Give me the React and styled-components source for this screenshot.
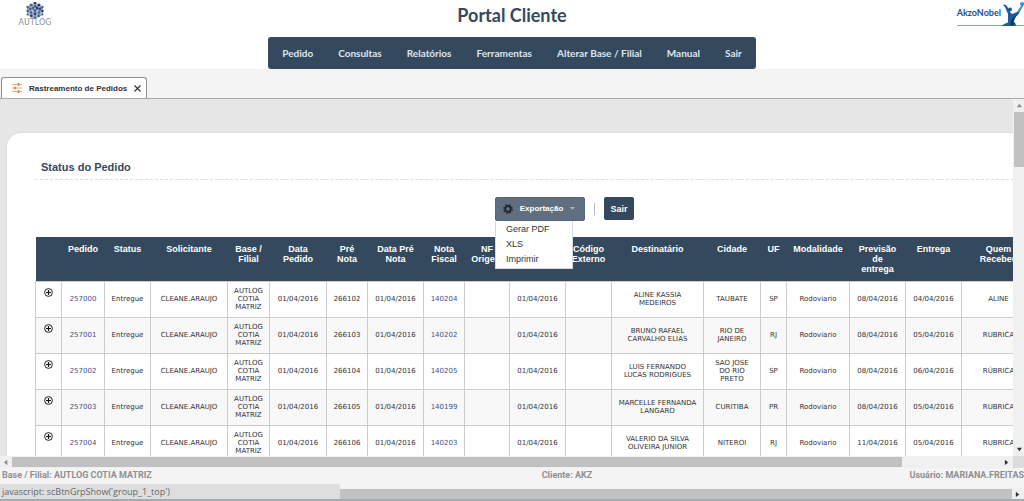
import React from 'react';
import styled, { createGlobalStyle } from 'styled-components';

const menu = ['Pedido', 'Consultas', 'Relatórios', 'Ferramentas', 'Alterar Base / Filial', 'Manual', 'Sair'];

const columns = [
  { title: '', width: 26 },
  { title: 'Pedido', width: 43 },
  { title: 'Status', width: 46 },
  { title: 'Solicitante', width: 77 },
  { title: 'Base / Filial', width: 42 },
  { title: 'Data Pedido', width: 57 },
  { title: 'Pré Nota', width: 41 },
  { title: 'Data Pré Nota', width: 56 },
  { title: 'Nota Fiscal', width: 41 },
  { title: 'NF Origem', width: 45 },
  { title: '', width: 56 },
  { title: 'Código Externo', width: 46 },
  { title: 'Destinatário', width: 92 },
  { title: 'Cidade', width: 57 },
  { title: 'UF', width: 26 },
  { title: 'Modalidade', width: 63 },
  { title: 'Previsão de entrega', width: 56 },
  { title: 'Entrega', width: 56 },
  { title: 'Quem Recebeu', width: 74 },
  { title: '', width: 58 },
];

const orders = [
  { id: '257000', pre: '266102', nf: '140204', dest: 'ALINE KASSIA MEDEIROS', city: 'TAUBATE', uf: 'SP', due: '08/04/2016', done: '04/04/2016', by: 'ALINE' },
  { id: '257001', pre: '266103', nf: '140202', dest: 'BRUNO RAFAEL CARVALHO ELIAS', city: 'RIO DE JANEIRO', uf: 'RJ', due: '08/04/2016', done: '05/04/2016', by: 'RUBRICA' },
  { id: '257002', pre: '266104', nf: '140205', dest: 'LUIS FERNANDO LUCAS RODRIGUES', city: 'SAO JOSE DO RIO PRETO', uf: 'SP', due: '08/04/2016', done: '06/04/2016', by: 'RÚBRICA' },
  { id: '257003', pre: '266105', nf: '140199', dest: 'MARCELLE FERNANDA LANGARO', city: 'CURITIBA', uf: 'PR', due: '08/04/2016', done: '05/04/2016', by: 'RUBRICA' },
  { id: '257004', pre: '266106', nf: '140203', dest: 'VALERIO DA SILVA OLIVEIRA JUNIOR', city: 'NITEROI', uf: 'RJ', due: '11/04/2016', done: '05/04/2016', by: 'RUBRICA' },
];

const cubeDots = [
  [9, 1, 1.4], [5, 3, 1.5], [9, 4, 1.2], [13, 3, 1.5], [1.6, 5, 1.2], [7, 6, 1.4], [11, 6, 1.4], [16.4, 5, 1.2],
  [4, 7, 1.4], [14, 7, 1.4], [1.6, 9, 1.3], [9, 8.5, 1.5], [16.4, 9, 1.3], [5, 10.5, 1.3], [13, 10.5, 1.3],
  [9, 12, 1.4], [1.6, 12.5, 1.1], [16.4, 12.5, 1.1], [5.4, 14, 1.4], [12.6, 14, 1.4], [9, 16, 1.4],
];

export default function App() {
  return (
    <Page>
      <GlobalStyle />
      <Header>
        <AutlogLogo>
          <svg width="18" height="17" viewBox="0 0 18 17" aria-hidden="true">
            <path d="M9 1L16.4 5V12.5L9 16L1.6 12.5V5Z" fill="#b9c6da" />
            <path d="M9 1L16.4 5V12.5L9 16L1.6 12.5V5ZM1.6 5L9 8.5L16.4 5M9 8.5V16M5 3L13 7V14M13 3L5 7V14M1.6 9L9 12L16.4 9" fill="none" stroke="#7287a8" strokeWidth=".8" />
            {cubeDots.map(([x, y, r], i) => (
              <circle key={i} cx={x} cy={y} r={r} fill={i % 3 ? '#4a648f' : '#2a416d'} />
            ))}
          </svg>
          <span>AUTLOG</span>
        </AutlogLogo>
        <Center>
          <PortalTitle>Portal Cliente</PortalTitle>
          <Nav>
            {menu.map((item) => (
              <NavLink key={item} href="#">{item}</NavLink>
            ))}
          </Nav>
        </Center>
        <AkzoLogo>
          <span>AkzoNobel</span>
          <svg width="23" height="24" viewBox="0 0 23 24" aria-hidden="true">
            <path d="M0 24C3 22 5 21 7 20.500L7 12L4 5L2 3L4 2.500L6 4L9 10L11 12L16 10L20 4L19 1L22 0L23 2L17 13L13 16L12 19C14 20 15 22 15 24Z" fill="#1c5c9e" />
            <circle cx="9" cy="7.500" r="1.900" fill="#17508f" />
            <path d="M9 23L11 17L16 12L12.500 20L13 23Z" fill="#0f3564" />
            <path d="M16.500 10L20 4L19 1L22 0L21 5L18 10Z" fill="#4fa3cf" />
          </svg>
        </AkzoLogo>
      </Header>

      <TabBar>
        <Tab>
          <svg width="10" height="10" viewBox="0 0 10 10" aria-hidden="true">
            <path d="M0 1.5H10M0 5H10M0 8.5H10" stroke="#f4a078" strokeWidth="1.2" />
            <path d="M6.5 0V3M3 3.5V6.5M6.5 7V10" stroke="#ee7a45" strokeWidth="1.6" />
          </svg>
          <span>Rastreamento de Pedidos</span>
          <CloseButton type="button" aria-label="Fechar">
            <svg width="7" height="7" viewBox="0 0 7 7">
              <path d="M.5 .5L6.5 6.5M6.5 .5L.5 6.5" stroke="#333" strokeWidth="1.2" />
            </svg>
          </CloseButton>
        </Tab>
      </TabBar>

      <Pane>
        <Viewport>
          <Card>
            <CardTitle>Status do Pedido</CardTitle>
            <Toolbar>
              <ExportGroup>
                <ExportButton type="button">
                  <svg width="10" height="10" viewBox="0 0 10 10" aria-hidden="true">
                    <circle cx="5" cy="5" r="4.2" fill="none" stroke="#1d232a" strokeWidth="1.2" strokeDasharray="1.9 1.4" />
                    <circle cx="5" cy="5" r="2.8" fill="none" stroke="#1d232a" strokeWidth="1.8" />
                  </svg>
                  <span>Exportação</span>
                  <svg width="5" height="3" viewBox="0 0 5 3" aria-hidden="true">
                    <path d="M0 0H5L2.5 3Z" fill="#a9b2bc" />
                  </svg>
                </ExportButton>
                <ExportMenu>
                  <MenuItem href="#">Gerar PDF</MenuItem>
                  <MenuItem href="#">XLS</MenuItem>
                  <MenuItem href="#">Imprimir</MenuItem>
                </ExportMenu>
              </ExportGroup>
              <Separator />
              <ExitButton type="button">Sair</ExitButton>
            </Toolbar>
            <Grid>
              <colgroup>
                {columns.map((col, i) => (
                  <Col key={i} $width={col.width} />
                ))}
              </colgroup>
              <thead>
                <tr>
                  {columns.map((col, i) => (
                    <HeadCell key={i}>{col.title}</HeadCell>
                  ))}
                </tr>
              </thead>
              <tbody>
                {orders.map((order) => (
                  <Row key={order.id}>
                    <ExpandCell>
                      <ExpandButton type="button" aria-label={`Detalhes ${order.id}`}>
                        <svg width="9" height="9" viewBox="0 0 9 9">
                          <circle cx="4.5" cy="4.5" r="3.9" fill="none" stroke="#222" strokeWidth="1" />
                          <path d="M4.5 2V7M2 4.5H7" stroke="#111" strokeWidth="1.2" />
                        </svg>
                      </ExpandButton>
                    </ExpandCell>
                    <Cell><CellLink href="#">{order.id}</CellLink></Cell>
                    <Cell>Entregue</Cell>
                    <Cell>CLEANE.ARAUJO</Cell>
                    <Cell>AUTLOG COTIA MATRIZ</Cell>
                    <Cell>01/04/2016</Cell>
                    <Cell>{order.pre}</Cell>
                    <Cell>01/04/2016</Cell>
                    <Cell><CellLink href="#">{order.nf}</CellLink></Cell>
                    <Cell />
                    <Cell>01/04/2016</Cell>
                    <Cell />
                    <Cell>{order.dest}</Cell>
                    <Cell>{order.city}</Cell>
                    <Cell>{order.uf}</Cell>
                    <Cell>Rodoviario</Cell>
                    <Cell>{order.due}</Cell>
                    <Cell>{order.done}</Cell>
                    <Cell>{order.by}</Cell>
                    <Cell />
                  </Row>
                ))}
              </tbody>
            </Grid>
          </Card>
        </Viewport>
        <VerticalBar>
          <Arrow d="M0 4L3 0L6 4Z" color="#8a8a8a" />
          <VerticalThumb />
          <Arrow d="M0 0L3 4L6 0Z" color="#333" />
        </VerticalBar>
        <HorizontalBar>
          <Arrow d="M4 0L0 3L4 6Z" color="#8a8a8a" />
          <Track><Thumb $size="90%" /></Track>
          <Arrow d="M0 0L4 3L0 6Z" color="#333" />
        </HorizontalBar>
        <Corner />
      </Pane>

      <Footer>
        <span>Base / Filial: AUTLOG COTIA MATRIZ</span>
        <span>Cliente: AKZ</span>
        <span>Usuário: MARIANA.FREITAS</span>
      </Footer>
      <PageBar>
        <Track><Thumb $size="100%" /></Track>
        <Arrow d="M0 0L4 3L0 6Z" color="#333" />
      </PageBar>
      <LinkStatus>javascript: scBtnGrpShow('group_1_top')</LinkStatus>
    </Page>
  );
}

function Arrow({ d, color }) {
  return (
    <ArrowBox>
      <svg width="6" height="6" viewBox="-1 -1 7 7" aria-hidden="true">
        <path d={d} fill={color} />
      </svg>
    </ArrowBox>
  );
}

const GlobalStyle = createGlobalStyle`
  * {
    box-sizing: border-box;
  }

  body {
    margin: 0;
    background: #ffffff;
    font-family: 'Liberation Sans', Arial, sans-serif;
    font-size: 9px;
  }

  svg {
    display: block;
    flex: none;
  }

  button {
    border: 0;
    padding: 0;
    font: inherit;
  }

  a {
    text-decoration: none;
  }
`;

const Page = styled.div`
  position: relative;
  display: flex;
  flex-direction: column;
  height: 100vh;
  overflow: hidden;
  border-bottom: 2px solid #a3abb3;
`;

const Header = styled.header`
  display: grid;
  grid-template-columns: 1fr auto 1fr;
  height: 69px;
  flex: none;
`;

const AutlogLogo = styled.div`
  display: flex;
  flex-direction: column;
  align-items: center;
  justify-self: start;
  width: 42px;
  margin: 2px 0 0 14px;
  color: #8c9199;
  font: 8px/8px 'DejaVu Sans', sans-serif;
`;

const Center = styled.div`
  display: flex;
  flex-direction: column;
  align-items: center;
  justify-content: space-between;
`;

const PortalTitle = styled.h1`
  margin: 3px 0 0;
  color: #34495e;
  font: bold 18px/24px Lato, sans-serif;
`;

const Nav = styled.nav`
  display: flex;
  align-items: center;
  gap: 25px;
  height: 32px;
  padding: 0 14px;
  border-radius: 3px;
  background: #34495e;
`;

const NavLink = styled.a`
  color: #dfe6ec;
  font: bold 10px/16px Lato, sans-serif;
  white-space: nowrap;
`;

const AkzoLogo = styled.div`
  display: flex;
  justify-self: end;
  height: 26px;
  padding-top: 2px;
  border-bottom: 1px solid #7fa6d0;
  color: #1d4f91;
  font: bold 9px/22px Lato, sans-serif;
`;

const TabBar = styled.div`
  display: flex;
  align-items: flex-end;
  height: 30px;
  flex: none;
  padding-left: 1px;
  border-bottom: 1px solid #a9a9a9;
  background: #f4f4f4;
`;

const Tab = styled.div`
  display: flex;
  align-items: center;
  gap: 7px;
  height: 21px;
  padding: 0 5px 0 10px;
  border: 1px solid #8f8f8f;
  border-bottom: 0;
  border-radius: 3px 3px 0 0;
  background: #ffffff;
  color: #333333;
  font-size: 8px;
  font-weight: bold;
`;

const CloseButton = styled.button`
  background: none;
`;

const Pane = styled.main`
  display: grid;
  grid-template-columns: minmax(0, 1fr) 11px;
  grid-template-rows: minmax(0, 1fr) 12px;
  flex: 1;
  min-height: 0;
`;

const Viewport = styled.div`
  overflow: hidden;
  padding: 34px 0 0 7px;
  background: #e6e6e6;
`;

const Card = styled.section`
  width: max-content;
  min-width: 100%;
  padding: 28px 28px 40px;
  border-radius: 14px;
  background: #ffffff;
  box-shadow: 0 0 2px #cccccc;
`;

const CardTitle = styled.h2`
  margin: 0;
  padding: 0 6px 5px;
  border-bottom: 1px dashed #dddddd;
  color: #34495e;
  font-size: 11px;
  line-height: 13px;
`;

const Toolbar = styled.div`
  display: flex;
  align-items: center;
  justify-content: center;
  gap: 9px;
  height: 57px;
`;

const ExportGroup = styled.div`
  position: relative;
`;

const ExportButton = styled.button`
  display: flex;
  align-items: center;
  justify-content: space-between;
  width: 90px;
  height: 24px;
  padding: 0 9px 0 7px;
  border: 1px solid #52657a;
  border-radius: 2px;
  background: #5f6f80;
  color: #ffffff;
  font-size: 8px;
  font-weight: bold;
`;

const ExportMenu = styled.div`
  position: absolute;
  top: 100%;
  left: 0;
  width: 78px;
  padding: 1px 0;
  border: 1px solid #d5dade;
  border-top: 0;
  background: #ffffff;
`;

const MenuItem = styled.a`
  display: block;
  padding-left: 10px;
  color: #333333;
  line-height: 15px;
`;

const Separator = styled.div`
  width: 1px;
  height: 12px;
  background: #b5bcc3;
`;

const ExitButton = styled.button`
  width: 30px;
  height: 23px;
  border-radius: 2px;
  background: #34495e;
  color: #ffffff;
  font-weight: bold;
`;

const Grid = styled.table`
  width: 1058px;
  table-layout: fixed;
  border-collapse: collapse;
  text-align: center;
`;

const Col = styled.col`
  width: ${(props) => props.$width}px;
`;

const HeadCell = styled.th`
  height: 44px;
  padding: 7px 6px 0;
  background: #34495e;
  color: #ffffff;
  font-size: 9px;
  line-height: 10px;
  vertical-align: top;
`;

const Row = styled.tr`
  height: 36px;

  &:nth-child(even) {
    background: #f8f8f8;
  }
`;

const Cell = styled.td`
  padding: 0 5px;
  border: 1px solid #cccccc;
  color: #333333;
  font: 7px/8px 'DejaVu Sans', sans-serif;
`;

const ExpandCell = styled(Cell)`
  padding-top: 6px;
  vertical-align: top;
`;

const ExpandButton = styled.button`
  background: none;
`;

const CellLink = styled.a`
  color: #3f4f8c;
`;

const VerticalBar = styled.div`
  display: flex;
  flex-direction: column;
  background: #f0f0f0;
`;

const VerticalThumb = styled.div`
  width: 10px;
  height: 55px;
  margin: 0 0 auto 1px;
  background: #c1c1c1;
`;

const HorizontalBar = styled.div`
  display: flex;
  align-items: center;
  background: #f0f0f0;
`;

const Track = styled.div`
  flex: 1;
  height: 10px;
`;

const Thumb = styled.div`
  width: ${(props) => props.$size};
  height: 100%;
  background: #c1c1c1;
`;

const ArrowBox = styled.span`
  display: flex;
  align-items: center;
  justify-content: center;
  width: 12px;
  height: 13px;
`;

const Corner = styled.div`
  background: #dcdcdc;
`;

const Footer = styled.footer`
  display: grid;
  grid-template-columns: 5fr auto 4fr;
  height: 20px;
  flex: none;
  padding-left: 2px;
  background: #f4f4f4;
  color: #8f8f8f;
  font: bold 9px/14px Roboto, sans-serif;
  white-space: nowrap;

  span:last-child {
    text-align: right;
  }
`;

const PageBar = styled.div`
  display: flex;
  align-items: center;
  height: 11px;
  flex: none;
  background: #f0f0f0;
`;

const LinkStatus = styled.div`
  position: absolute;
  bottom: 0;
  left: 0;
  width: 340px;
  max-width: 100%;
  padding-left: 2px;
  border-top-right-radius: 2px;
  background: #dedede;
  color: #666666;
  font: 9px/15px 'Open Sans', sans-serif;
`;
